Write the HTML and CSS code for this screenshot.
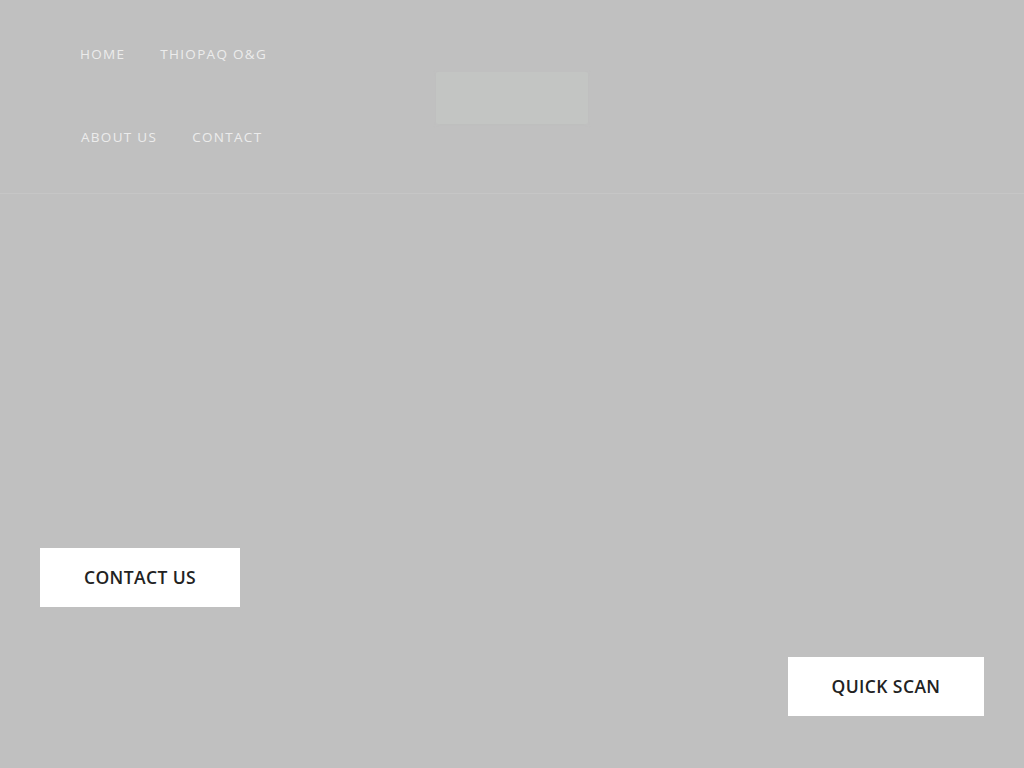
FILE: index.html
```html
<!DOCTYPE html>
<html lang="en">
<head>
<meta charset="utf-8">
<title>THIOPAQ O&amp;G</title>
<link rel="stylesheet" href="styles.css">
</head>
<body>
<header class="site-header">
  <nav class="main-nav">
    <ul class="nav-row">
      <li><a href="#">HOME</a></li>
      <li><a href="#">THIOPAQ O&amp;G</a></li>
    </ul>
    <ul class="nav-row">
      <li><a href="#">ABOUT US</a></li>
      <li><a href="#">CONTACT</a></li>
    </ul>
  </nav>
  <div class="logo"></div>
</header>
<main class="hero">
  <div class="hero-top">
    <a class="btn" href="#">CONTACT US</a>
  </div>
  <div class="hero-bottom">
    <a class="btn btn-scan" href="#">QUICK SCAN</a>
  </div>
</main>
</body>
</html>
```

FILE: styles.css
```css
* { box-sizing: border-box; }
html, body { margin: 0; padding: 0; }
body {
  background: #c0c0c0;
  font-family: "Open Sans", "Liberation Sans", sans-serif;
  width: 1024px;
  height: 768px;
  overflow: hidden;
}
.site-header {
  height: 194px;
  border-bottom: 1px solid #c6c6c6;
  position: relative;
  display: flex;
}
.main-nav {
  padding: 42px 0 0 80px;
  display: flex;
  flex-direction: column;
  gap: 61px;
}
.nav-row {
  list-style: none;
  margin: 0;
  padding: 0;
  display: flex;
  gap: 35px;
}
.nav-row + .nav-row { padding-left: 1px; }
.nav-row a {
  color: #ececec;
  text-decoration: none;
  font-size: 13.5px;
  letter-spacing: 1.3px;
  line-height: 20px;
}
.logo {
  position: absolute;
  left: 436px;
  top: 72px;
  width: 152px;
  height: 52px;
  background: #c3c5c3;
  box-shadow: 0 1px 3px rgba(190,192,190,0.6);
  border-radius: 2px;
}
.hero {
  height: 574px;
  display: flex;
  flex-direction: column;
  padding: 354px 40px 0 40px;
}
.hero-bottom {
  display: flex;
  justify-content: flex-end;
  margin-top: 50px;
}
.btn {
  display: inline-flex;
  align-items: center;
  justify-content: center;
  width: 200px;
  height: 59px;
  padding-bottom: 2px;
  background: #fff;
  color: #222;
  text-decoration: none;
  font-size: 17.5px;
  font-weight: 600;
  letter-spacing: 0.4px;
}
.btn-scan { width: 196px; }
```
